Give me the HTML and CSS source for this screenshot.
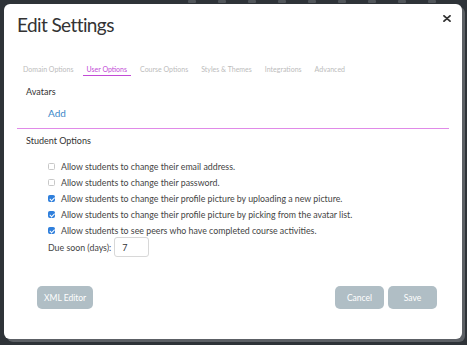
FILE: index.html
```html
<!DOCTYPE html>
<html>
<head>
    <title>Edit Settings</title>
    <link rel="stylesheet" href="styles.css">
</head>
<body>
    <div class="backdrop">
        <span class="bg-icon"></span><span class="bg-icon"></span><span class="bg-icon"></span><span class="bg-icon"></span><span class="bg-icon"></span><span class="bg-icon"></span><span class="bg-icon"></span><span class="bg-icon"></span><span class="bg-icon"></span>
    </div>
    <div class="modal">
        <div class="modal-header">
            <h1 class="title">Edit Settings</h1>
            <svg class="close" width="8" height="7" viewBox="0 0 8 7">
                <path d="M1 0.8 L7 6.2 M7 0.8 L1 6.2" stroke="#333" stroke-width="1.8" stroke-linecap="round"/>
            </svg>
        </div>

        <ul class="tabs">
            <li class="tab">Domain Options</li>
            <li class="tab active">User Options</li>
            <li class="tab">Course Options</li>
            <li class="tab">Styles &amp; Themes</li>
            <li class="tab">Integrations</li>
            <li class="tab">Advanced</li>
        </ul>

        <div class="section">
            <h2 class="section-title">Avatars</h2>
            <a class="add-link" href="#">Add</a>
        </div>
        <div class="divider"></div>

        <div class="section">
            <h2 class="section-title student">Student Options</h2>
            <ul class="options">
                <li><span class="check"></span>Allow students to change their email address.</li>
                <li><span class="check"></span>Allow students to change their password.</li>
                <li><span class="check on"></span>Allow students to change their profile picture by uploading a new picture.</li>
                <li><span class="check on"></span>Allow students to change their profile picture by picking from the avatar list.</li>
                <li><span class="check on"></span>Allow students to see peers who have completed course activities.</li>
            </ul>
            <div class="due-row">
                <label>Due soon (days):</label>
                <input class="due-input" type="text" value="7">
            </div>
        </div>

        <div class="footer">
            <button class="btn">XML Editor</button>
            <div class="footer-right">
                <button class="btn">Cancel</button>
                <button class="btn">Save</button>
            </div>
        </div>
    </div>
</body>
</html>
```

FILE: styles.css
```css
body {
    margin: 0;
    background-color: #2e3338;
    font-family: 'Lato', sans-serif;
    width: 467px;
    height: 345px;
    overflow: hidden;
    position: relative;
}

/* faint toolbar icons of the page behind the dialog */
.backdrop {
    position: absolute;
    top: 0;
    left: 188px;
    display: flex;
    gap: 22px;
}

.bg-icon {
    width: 8px;
    height: 3px;
    background-color: #50555a;
    border-radius: 1px;
}

.modal {
    position: relative;
    margin: 4px 5px 0 4px;
    height: 335px;
    background-color: #ffffff;
    border-radius: 6px;
    box-shadow: 3px 3px 0 #5c6065;
    display: flex;
    flex-direction: column;
}

.modal-header {
    display: flex;
    justify-content: space-between;
    align-items: flex-start;
    padding: 11px 11px 0 13px;
}

.title {
    margin: 0;
    font-size: 19px;
    line-height: 19px;
    letter-spacing: -0.6px;
    font-weight: normal;
    color: #333;
}

.close {
    margin-top: 0;
}

.tabs {
    list-style-type: none;
    display: flex;
    gap: 5px;
    margin: 30px 0 0 0;
    padding: 0 0 0 15px;
}

.tab {
    font-size: 7px;
    line-height: 10px;
    color: #bcbcbc;
    padding: 0 4px 1px 4px;
    border-bottom: 1px solid transparent;
}

.tab.active {
    color: #c24bd6;
    border-bottom-color: #c24bd6;
}

.section {
    padding: 0 0 0 22px;
}

.section-title {
    font-size: 9px;
    line-height: 11px;
    font-weight: normal;
    color: #333;
    margin: 10px 0 0 0;
}

.section-title.student {
    margin-top: 6px;
}

.add-link {
    display: block;
    font-size: 10px;
    line-height: 12px;
    color: #3a87c8;
    text-decoration: none;
    margin: 10px 0 0 22px;
}

.divider {
    height: 1px;
    background-color: #e08ae8;
    margin: 9px 13px 0 13px;
}

.options {
    list-style-type: none;
    margin: 12px 0 0 0;
    padding: 0 0 0 22px;
}

.options li {
    display: flex;
    align-items: center;
    height: 16px;
    font-size: 8.8px;
    color: #444;
}

.check {
    width: 5px;
    height: 5px;
    border: 1px solid #c8c8c8;
    border-radius: 1.5px;
    margin-right: 6px;
    position: relative;
}

.check.on {
    background-color: #2f7fdc;
    border-color: #2f7fdc;
}

.check.on::after {
    content: "";
    position: absolute;
    left: 1.5px;
    top: 0;
    width: 1.5px;
    height: 3.5px;
    border: solid #fff;
    border-width: 0 1px 1px 0;
    transform: rotate(45deg);
}

.due-row {
    display: flex;
    align-items: center;
    margin: -1px 0 0 22px;
    font-size: 8.8px;
    color: #444;
}

.due-input {
    margin-left: 3px;
    width: 35px;
    height: 20px;
    box-sizing: border-box;
    border: 1px solid #d8d8d8;
    border-radius: 3px;
    font-family: 'Lato', sans-serif;
    font-size: 9px;
    padding: 0 7px;
    color: #333;
}

.footer {
    display: flex;
    justify-content: space-between;
    margin-top: auto;
    padding: 0 25px 30px 33px;
}

.footer-right {
    display: flex;
    gap: 4px;
}

.btn {
    background-color: #b0bec5;
    border: none;
    color: #ffffff;
    font-family: 'Lato', sans-serif;
    font-size: 8.5px;
    height: 23px;
    padding: 0 7px;
    border-radius: 5px;
    min-width: 49px;
}
```
